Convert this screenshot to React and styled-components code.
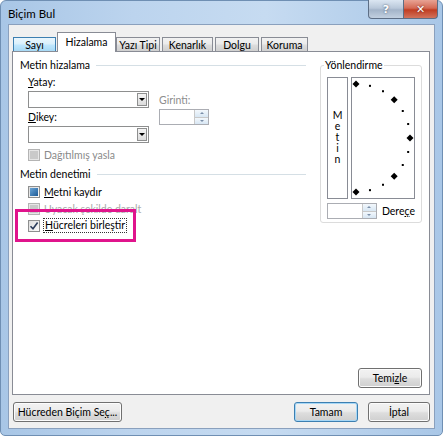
import React from 'react';
import styled, { createGlobalStyle, css } from 'styled-components';

const GlobalStyle = createGlobalStyle`
  html, body {
    margin: 0;
    padding: 0;
    background: #ffffff;
  }
  body {
    font-family: Lato, "Noto Sans", "Liberation Sans", sans-serif;
    font-size: 10.5px;
    color: #000;
  }
`;

const Window = styled.div`
  width: 443px;
  height: 436px;
  box-sizing: border-box;
  display: flex;
  flex-direction: column;
  background: linear-gradient(90deg, #a8c6e6 0%, #bcd4ee 30%, #c6dbf1 60%, #a9c7e7 100%);
  border: 1px solid #6f8fb3;
  border-radius: 6px 6px 5px 5px;
  padding: 0 7px 6px 7px;
`;

const TitleBar = styled.div`
  height: 23px;
  display: flex;
  align-items: flex-start;
  justify-content: space-between;
  flex-shrink: 0;
`;

const Title = styled.div`
  padding-top: 6px;
  font-size: 11.5px;
  color: #000;
`;

const Caption = styled.div`
  display: flex;
  margin-right: -3px;
  margin-top: -1px;
`;

const CaptionButton = styled.div`
  width: ${p => p.$w}px;
  height: 18px;
  display: flex;
  align-items: center;
  justify-content: center;
  border: 1px solid #5d6e85;
  border-top: none;
  font-family: "DejaVu Sans", sans-serif;
  font-weight: bold;
  font-size: 11px;
  color: #fff;
  ${p => p.$close ? css`
    background: linear-gradient(180deg, #e8a394 0%, #d46a55 45%, #c03d22 55%, #d2735c 100%);
    border-radius: 0 0 4px 0;
    border-left: none;
    text-shadow: 0 0 2px #5a1a10;
  ` : css`
    background: linear-gradient(180deg, #dbe6f2 0%, #b9c8da 45%, #a3b4c9 55%, #c2d0e0 100%);
    border-radius: 0 0 0 4px;
    color: #fff;
    text-shadow: 0 0 2px #3a4a60;
  `}
`;

const Client = styled.div`
  flex: 1;
  display: flex;
  flex-direction: column;
  background: #f0f0f0;
  border: 1px solid #8aa0bd;
  padding: 7px 4px 0 3px;
`;

const Tabs = styled.div`
  display: flex;
  align-items: flex-end;
  height: 19px;
  padding-left: 1px;
  position: relative;
  z-index: 1;
`;

const Tab = styled.div`
  width: ${p => p.$w}px;
  height: 14px;
  box-sizing: border-box;
  margin-left: ${p => p.$ml || 0}px;
  display: flex;
  align-items: center;
  justify-content: center;
  border: 1px solid #898c95;
  border-bottom: none;
  ${p => p.$active && css`
    background: #fff;
    height: 20px;
    margin-bottom: -1px;
    padding-bottom: 1px;
  `}
  ${p => p.$hover && css`
    background: linear-gradient(180deg, #eaf6fd 0%, #d9f0fc 45%, #bee6fd 55%, #a7d9f5 100%);
    border-color: #3c7fb1;
  `}
  ${p => !p.$active && !p.$hover && css`
    background: linear-gradient(180deg, #f2f2f2 0%, #ebebeb 45%, #dddddd 55%, #cfcfcf 100%);
  `}
`;

const Panel = styled.div`
  height: 344px;
  box-sizing: border-box;
  background: #fff;
  border: 1px solid #898c95;
  display: flex;
  flex-direction: column;
  padding: 6px 7px 6px 7px;
`;

const PanelBody = styled.div`
  flex: 1;
  display: flex;
  justify-content: space-between;
`;

const LeftColumn = styled.div`
  width: 286px;
  display: flex;
  flex-direction: column;
`;

const GroupHeader = styled.div`
  display: flex;
  align-items: center;
  gap: 6px;
  height: 14px;
  margin-top: ${p => p.$top || 0}px;
  &::after {
    content: '';
    flex: 1;
    height: 1px;
    background: #d5dfe5;
  }
`;

const GroupBody = styled.div`
  padding-left: 8px;
  display: flex;
  flex-direction: column;
`;

const FieldLabel = styled.div`
  height: 13px;
  line-height: 13px;
  margin-top: ${p => p.$top || 0}px;
  color: ${p => (p.$disabled ? '#8d8d8d' : '#000')};
`;

const U = styled.span`
  text-decoration: underline;
  text-underline-offset: 1px;
`;

const FieldRow = styled.div`
  display: flex;
  align-items: flex-start;
  gap: 10px;
`;

const FieldCol = styled.div`
  display: flex;
  flex-direction: column;
  margin-top: ${p => p.$top || 0}px;
`;

const Select = styled.div`
  width: 121px;
  height: 17px;
  box-sizing: border-box;
  border: 1px solid #8e8f8f;
  background: #fff;
  display: flex;
  justify-content: flex-end;
  padding: 1px;
  margin-top: ${p => p.$top || 0}px;
`;

const DropButton = styled.div`
  width: 10px;
  box-sizing: border-box;
  border: 1px solid #8e8f8f;
  background: linear-gradient(180deg, #f4f4f4, #dcdcdc);
  display: flex;
  align-items: center;
  justify-content: center;
  &::after {
    content: '';
    border-left: 3px solid transparent;
    border-right: 3px solid transparent;
    border-top: 3px solid #000;
  }
`;

const Spinner = styled.div`
  width: ${p => p.$w}px;
  height: 16px;
  box-sizing: border-box;
  border: 1px solid #abadb3;
  background: #fff;
  display: flex;
  justify-content: flex-end;
  margin-top: ${p => p.$top || 0}px;
`;

const SpinButtons = styled.div`
  width: 13px;
  display: flex;
  flex-direction: column;
  border-left: 1px solid #c8c8c8;
`;

const SpinButton = styled.div`
  flex: 1;
  background: linear-gradient(180deg, #f3f8fc, #d7e6f3);
  border-bottom: ${p => (p.$up ? '1px solid #c8c8c8' : 'none')};
  display: flex;
  align-items: center;
  justify-content: center;
  &::after {
    content: '';
    border-left: 2px solid transparent;
    border-right: 2px solid transparent;
    ${p => (p.$up ? 'border-bottom: 2px solid #7a8ea8;' : 'border-top: 2px solid #7a8ea8;')}
  }
`;

const CheckRow = styled.div`
  display: flex;
  align-items: center;
  gap: 4px;
  height: 17px;
  margin-top: ${p => p.$top || 0}px;
  color: ${p => p.$color || '#000'};
`;

const Box = styled.div`
  width: 12px;
  height: 12px;
  box-sizing: border-box;
  border: 1px solid ${p => (p.$disabled ? '#b4b4b4' : '#8e8f8f')};
  background: ${p => (p.$disabled ? '#e6e6e6' : 'linear-gradient(135deg, #dcdcdc, #fbfbfb)')};
  display: flex;
  align-items: center;
  justify-content: center;
  flex-shrink: 0;
  ${p => p.$mixed && css`
    &::after {
      content: '';
      width: 8px;
      height: 8px;
      background: linear-gradient(135deg, #6aa6d8, #1d5a96);
    }
  `}
  ${p => p.$disabled && css`
    &::after {
      content: '';
      width: 8px;
      height: 8px;
      background: #c9c9c9;
    }
  `}
`;

const FocusText = styled.span`
  outline: 1px dotted #333;
  padding: 0 1px;
  line-height: 13px;
`;

const Highlight = styled.div`
  align-self: flex-start;
  border: 3px solid #e0148c;
  margin: -8px 0 0 -13px;
  padding: 5px 7px 5px 10px;
`;

const Orientation = styled.div`
  width: 102px;
  height: 158px;
  box-sizing: border-box;
  margin-top: 7px;
  border: 1px solid #dcdcdc;
  border-radius: 3px;
  padding: 11px 6px 0 6px;
  display: flex;
  flex-direction: column;
  position: relative;
`;

const OrientLegend = styled.div`
  position: absolute;
  top: -7px;
  left: 3px;
  background: #fff;
  padding: 0 1px;
  line-height: 13px;
`;

const OrientRow = styled.div`
  display: flex;
  gap: 3px;
`;

const VerticalText = styled.div`
  width: 21px;
  height: 122px;
  box-sizing: border-box;
  border: 1px solid #898c95;
  display: flex;
  flex-direction: column;
  align-items: center;
  justify-content: center;
  padding-bottom: 2px;
`;

const Letter = styled.span`
  display: block;
  height: 11px;
  line-height: 11px;
`;

const Dial = styled.div`
  width: 64px;
  height: 122px;
  box-sizing: border-box;
  border: 1px solid #898c95;
`;

const DegreeRow = styled.div`
  display: flex;
  align-items: center;
  gap: 5px;
  margin-top: 4px;
`;

const Footer = styled.div`
  display: flex;
  justify-content: flex-end;
`;

const Button = styled.div`
  width: ${p => p.$w}px;
  height: 20px;
  box-sizing: border-box;
  border: 1px solid ${p => (p.$default ? '#3c7fb1' : '#707070')};
  border-radius: 3px;
  background: linear-gradient(180deg, #f2f2f2 0%, #ebebeb 45%, #dddddd 55%, #cfcfcf 100%);
  box-shadow: ${p => (p.$default ? 'inset 0 0 0 1px #a6d7f6' : 'inset 0 0 0 1px #fcfcfc')};
  display: flex;
  align-items: center;
  justify-content: center;
  margin-left: ${p => p.$ml || 0}px;
`;

const ButtonBar = styled.div`
  display: flex;
  align-items: center;
  margin-top: 7px;
  padding-left: 1px;
`;

const Spacer = styled.div`
  flex: 1;
`;

function DialDrawing() {
  const cx = 4;
  const cy = 60;
  const r = 54;
  const marks = [];
  for (let a = 90; a >= -90; a -= 15) {
    const rad = (a * Math.PI) / 180;
    const x = cx + r * Math.cos(rad);
    const y = cy - r * Math.sin(rad);
    if (a % 45 === 0) {
      marks.push(
        <polygon
          key={a}
          points={`${x},${y - 3.5} ${x + 3.5},${y} ${x},${y + 3.5} ${x - 3.5},${y}`}
          fill="#000"
        />
      );
    } else {
      marks.push(<rect key={a} x={x - 1} y={y - 1} width="2" height="2" fill="#000" />);
    }
  }
  return (
    <svg width="62" height="120" viewBox="0 0 62 120">
      {marks}
    </svg>
  );
}

const Check = () => (
  <svg width="10" height="10" viewBox="0 0 10 10">
    <path d="M1.5 5.2 L4 7.8 L8.6 1.6" fill="none" stroke="#2a3b5a" strokeWidth="1.6" />
  </svg>
);

export default function App() {
  return (
    <>
      <GlobalStyle />
      <Window>
        <TitleBar>
          <Title>Biçim Bul</Title>
          <Caption>
            <CaptionButton $w={34}>?</CaptionButton>
            <CaptionButton $w={33} $close>✕</CaptionButton>
          </Caption>
        </TitleBar>
        <Client>
          <Tabs>
            <Tab $w={43} $hover>Sayı</Tab>
            <Tab $w={59} $ml={1} $active>Hizalama</Tab>
            <Tab $w={44}>Yazı Tipi</Tab>
            <Tab $w={51} $ml={2}>Kenarlık</Tab>
            <Tab $w={44} $ml={2}>Dolgu</Tab>
            <Tab $w={47} $ml={2}>Koruma</Tab>
          </Tabs>
          <Panel>
            <PanelBody>
              <LeftColumn>
                <GroupHeader>Metin hizalama</GroupHeader>
                <GroupBody>
                  <FieldLabel $top={4}><U>Y</U>atay:</FieldLabel>
                  <FieldRow>
                    <FieldCol>
                      <Select $top={2}><DropButton /></Select>
                      <FieldLabel $top={3}><U>D</U>ikey:</FieldLabel>
                      <Select $top={2}><DropButton /></Select>
                    </FieldCol>
                    <FieldCol $top={5}>
                      <FieldLabel $disabled>Girinti:</FieldLabel>
                      <Spinner $w={50} $top={2}>
                        <SpinButtons>
                          <SpinButton $up />
                          <SpinButton />
                        </SpinButtons>
                      </Spinner>
                    </FieldCol>
                  </FieldRow>
                  <CheckRow $top={3} $color="#8a8a8a">
                    <Box $disabled />
                    Dağıtılmış yasla
                  </CheckRow>
                </GroupBody>
                <GroupHeader $top={4}>Metin denetimi</GroupHeader>
                <GroupBody>
                  <CheckRow $top={2}>
                    <Box $mixed />
                    <span><U>M</U>etni kaydır</span>
                  </CheckRow>
                  <CheckRow $color="#aaaaaa">
                    <Box $disabled />
                    Uyacak şekilde daralt
                  </CheckRow>
                  <Highlight>
                    <CheckRow>
                      <Box><Check /></Box>
                      <FocusText><U>H</U>ücreleri birleştir</FocusText>
                    </CheckRow>
                  </Highlight>
                </GroupBody>
              </LeftColumn>
              <Orientation>
                <OrientLegend>Yönlendirme</OrientLegend>
                <OrientRow>
                  <VerticalText>
                    <Letter>M</Letter>
                    <Letter>e</Letter>
                    <Letter>t</Letter>
                    <Letter>i</Letter>
                    <Letter>n</Letter>
                  </VerticalText>
                  <Dial>
                    <DialDrawing />
                  </Dial>
                </OrientRow>
                <DegreeRow>
                  <Spinner $w={50}>
                    <SpinButtons>
                      <SpinButton $up />
                      <SpinButton />
                    </SpinButtons>
                  </Spinner>
                  <span>Dere<U>ç</U>e</span>
                </DegreeRow>
              </Orientation>
            </PanelBody>
            <Footer>
              <Button $w={64}>Temi<U>z</U>le</Button>
            </Footer>
          </Panel>
          <ButtonBar>
            <Button $w={109}>Hücreden Biçim Se<U>ç</U>...</Button>
            <Spacer />
            <Button $w={64} $default>Tamam</Button>
            <Button $w={62} $ml={10}>İptal</Button>
          </ButtonBar>
        </Client>
      </Window>
    </>
  );
}
